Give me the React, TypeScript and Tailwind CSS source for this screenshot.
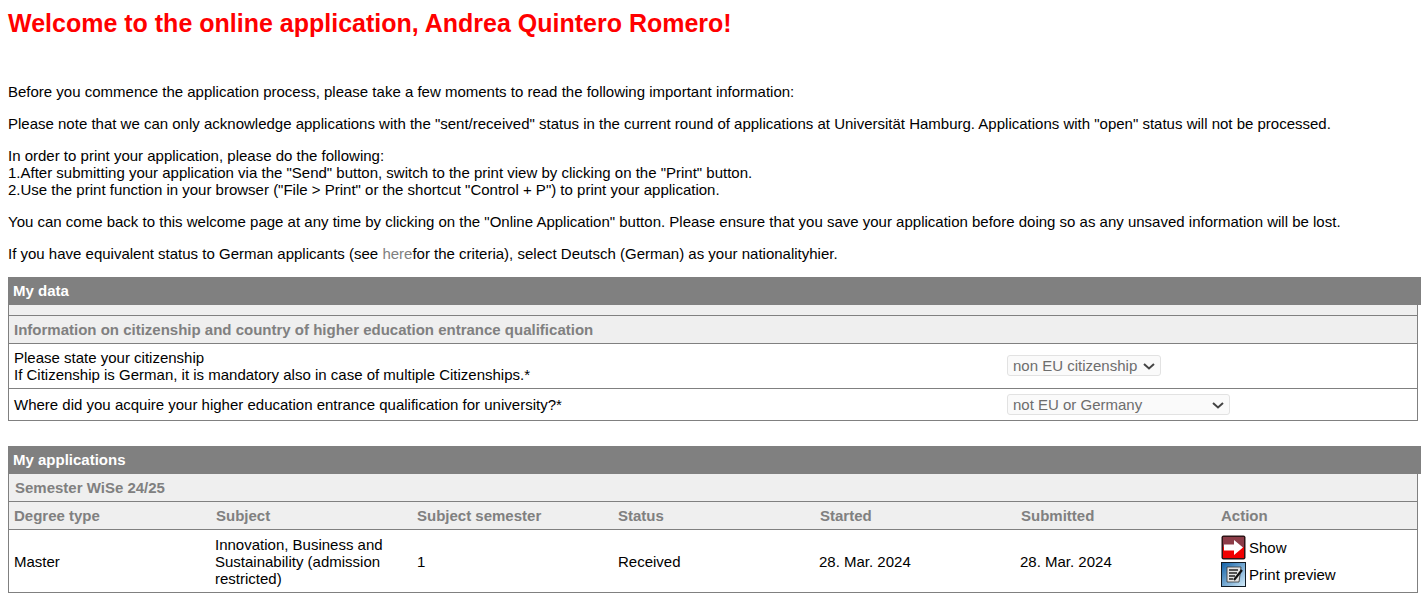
import React from "react";

const ShowIcon = () => (
  <svg width="25" height="25" viewBox="0 0 25 25" className="shrink-0">
    <rect x="0.5" y="0.5" width="24" height="24" rx="2" fill="#2c1416" />
    <rect x="2" y="2" width="21" height="10" fill="#8c3c48" />
    <rect x="2" y="12" width="21" height="11" fill="#f00000" />
    <path d="M3 9.5h10V5l9 7.5-9 7.5v-4.5H3z" fill="#fff" />
  </svg>
);

const PrintIcon = () => (
  <svg width="25" height="25" viewBox="0 0 25 25" className="shrink-0">
    <defs>
      <linearGradient id="pg" x1="0" y1="0" x2="1" y2="1">
        <stop offset="0" stopColor="#0f5fa6" />
        <stop offset="1" stopColor="#d6eefb" />
      </linearGradient>
    </defs>
    <rect x="0.5" y="0.5" width="24" height="24" fill="url(#pg)" stroke="#121c26" />
    <path d="M6 5h14l-2 15H6z" fill="#e4e4e4" stroke="#333" strokeWidth="0.8" />
    <path d="M8 8h9M8 11h8M8 14h6M8 17h4" stroke="#222" strokeWidth="1.7" />
    <path d="M21 8l-8 10" stroke="#111" strokeWidth="2.2" />
  </svg>
);

const Chevron = () => (
  <svg width="12" height="7" viewBox="0 0 12 7" className="shrink-0">
    <path d="M1 1l5 4.5L11 1" fill="none" stroke="#444" strokeWidth="2" />
  </svg>
);

const Select = ({ value, boxClass, chevronClass }: { value: string; boxClass: string; chevronClass: string }) => (
  <div className={`relative h-[21px] ${boxClass}`}>
    <select disabled className="h-full w-full appearance-none rounded-[3px] border border-[#e2e2e2] bg-[#fafafa] pl-[5px] text-[15px] text-[#6d6d6d] opacity-100">
      <option>{value}</option>
    </select>
    <div className={`pointer-events-none absolute top-[8px] ${chevronClass}`}>
      <Chevron />
    </div>
  </div>
);

const Bar = ({ children }: { children: React.ReactNode }) => (
  <div className="h-7 bg-[#808080] pl-[5px] font-bold text-white leading-7">{children}</div>
);

const heads: [string, string][] = [
  ["Degree type", ""],
  ["Subject", "pl-px"],
  ["Subject semester", "pl-px"],
  ["Status", "pl-px"],
  ["Started", "pl-[2px]"],
  ["Submitted", "pl-[2px]"],
  ["Action", "pl-px"],
];

export default function App() {
  return (
    <div className="h-[598px] overflow-hidden bg-white pl-2 pr-1 text-[15px] leading-[17px] text-black font-['Liberation_Sans',Arial,sans-serif]">
      <h1 className="pt-[9px] text-[25px] leading-[28px] font-bold text-[#ff0000]">
        Welcome to the online application, Andrea Quintero Romero!
      </h1>
      <div className="mt-[46px] flex flex-col gap-[15px]">
        <p>Before you commence the application process, please take a few moments to read the following important information:</p>
        <p>Please note that we can only acknowledge applications with the "sent/received" status in the current round of applications at Universität Hamburg. Applications with "open" status will not be processed.</p>
        <p>
          In order to print your application, please do the following:
          <br />
          1.After submitting your application via the "Send" button, switch to the print view by clicking on the "Print" button.
          <br />
          2.Use the print function in your browser ("File &gt; Print" or the shortcut "Control + P") to print your application.
        </p>
        <p>You can come back to this welcome page at any time by clicking on the "Online Application" button. Please ensure that you save your application before doing so as any unsaved information will be lost.</p>
        <p>
          If you have equivalent status to German applicants (see <span className="text-[#808080]">here</span>for the criteria), select Deutsch (German) as your nationalityhier.
        </p>
      </div>

      <div className="mt-[15px]">
        <Bar>My data</Bar>
        <div className="mr-[3px] border-x border-b border-[#808080]">
          <div className="h-[11px] border-b border-[#808080] bg-[#efefef]" />
          <div className="h-[28px] border-b border-[#808080] bg-[#efefef] pl-[5px] font-bold leading-[28px] text-[#808080]">
            Information on citizenship and country of higher education entrance qualification
          </div>
          <div className="flex h-[45px] items-center border-b border-[#808080] pl-[5px]">
            <div className="w-[993px]">
              Please state your citizenship
              <br />
              If Citizenship is German, it is mandatory also in case of multiple Citizenships.*
            </div>
            <Select value="non EU citizenship" boxClass="mb-px w-[154px]" chevronClass="left-[136px]" />
          </div>
          <div className="flex h-[31px] items-center pl-[5px]">
            <div className="w-[993px]">Where did you acquire your higher education entrance qualification for university?*</div>
            <Select value="not EU or Germany" boxClass="w-[223px]" chevronClass="left-[205px]" />
          </div>
        </div>
      </div>

      <div className="mt-[25px]">
        <Bar>My applications</Bar>
        <div className="mr-[3px] border-x border-b border-[#808080]">
          <div className="h-[28px] border-b border-[#808080] bg-[#efefef] pl-[6px] font-bold leading-[28px] text-[#808080]">
            Semester WiSe 24/25
          </div>
          <div className="grid h-[28px] grid-cols-[201px_201px_201px_201px_201px_201px_1fr] border-b border-[#808080] bg-[#efefef] pl-[5px] font-bold leading-[28px] text-[#808080]">
            {heads.map(([h, c]) => (
              <div key={h} className={c}>
                {h}
              </div>
            ))}
          </div>
          <div className="grid h-[62px] grid-cols-[201px_201px_201px_201px_201px_201px_1fr] items-center pl-[5px]">
            <div>Master</div>
            <div className="w-[180px]">Innovation, Business and Sustainability (admission restricted)</div>
            <div className="pl-px">1</div>
            <div className="pl-px">Received</div>
            <div className="pl-px">28. Mar. 2024</div>
            <div className="pl-px">28. Mar. 2024</div>
            <div className="flex flex-col gap-[2px] pl-px">
              <div className="flex items-center gap-[3px]">
                <ShowIcon />
                <span>Show</span>
              </div>
              <div className="flex items-center gap-[3px]">
                <PrintIcon />
                <span>Print preview</span>
              </div>
            </div>
          </div>
        </div>
      </div>
    </div>
  );
}
